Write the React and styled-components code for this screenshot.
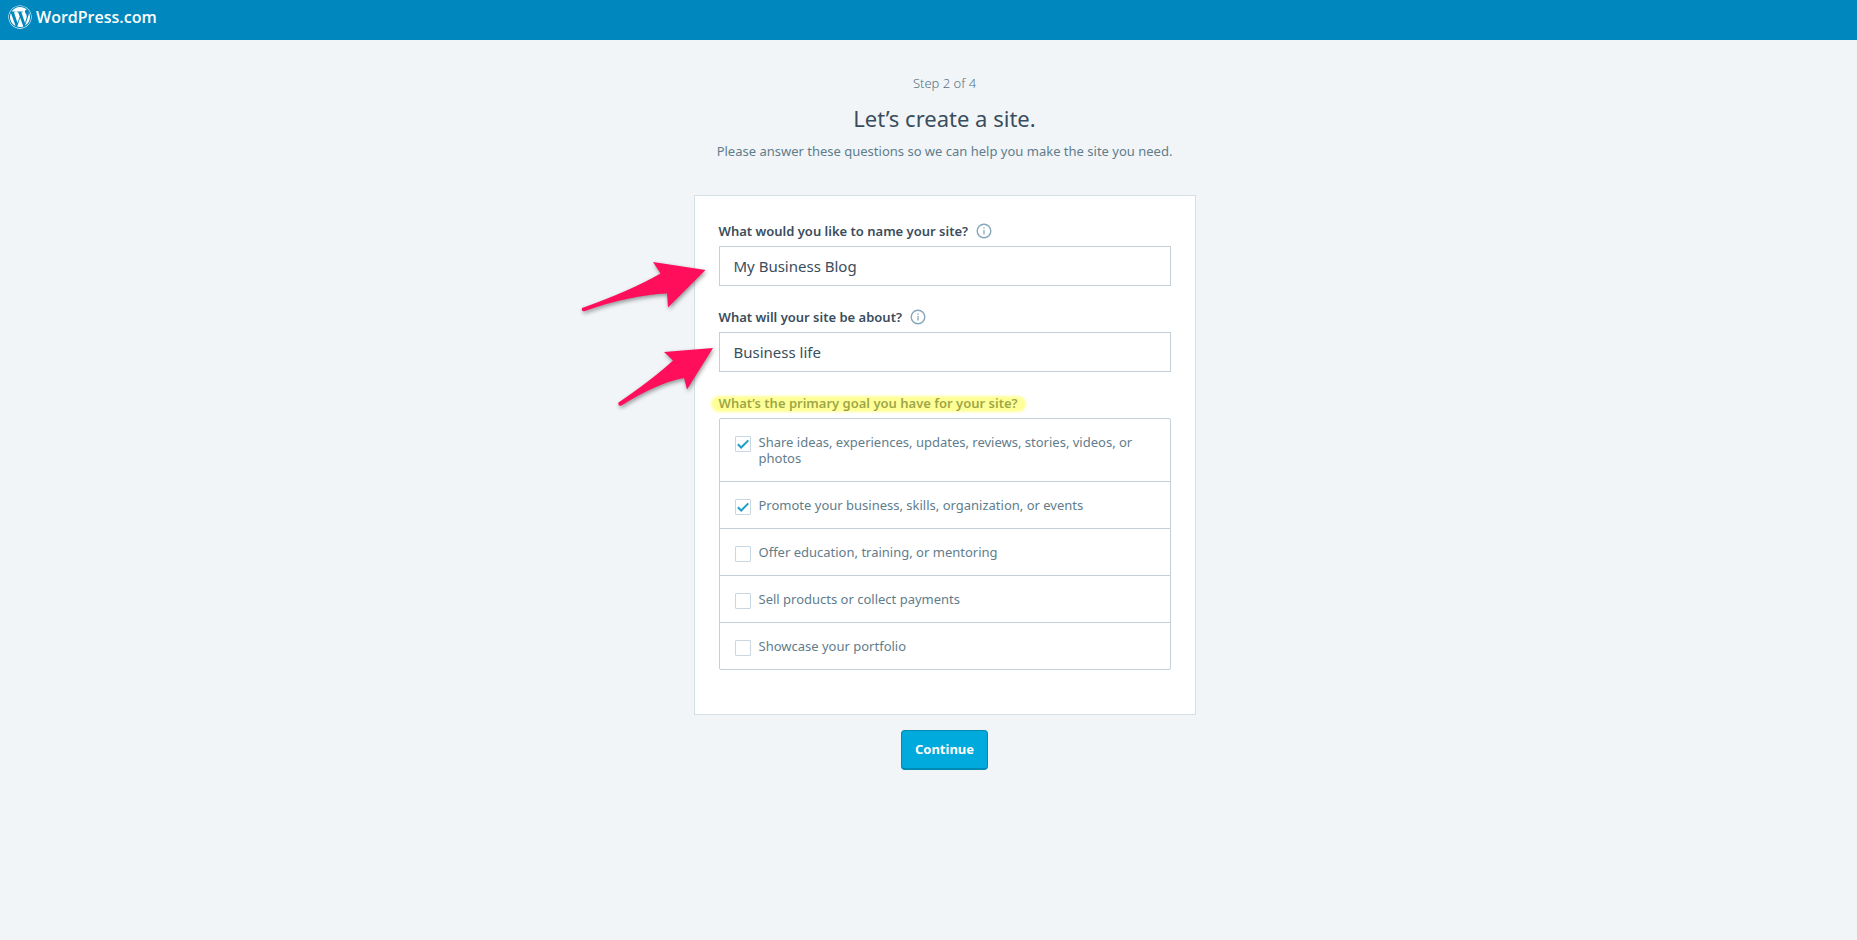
import { useState } from 'react';
import styled, { createGlobalStyle } from 'styled-components';
import { FaWordpress } from 'react-icons/fa';

const goals = [
  'Share ideas, experiences, updates, reviews, stories, videos, or photos',
  'Promote your business, skills, organization, or events',
  'Offer education, training, or mentoring',
  'Sell products or collect payments',
  'Showcase your portfolio',
];

function InfoIcon() {
  return (
    <svg width="16" height="16" viewBox="0 0 16 16" fill="none" aria-hidden="true">
      <circle cx="8" cy="8" r="6.8" stroke="#87a6bc" strokeWidth="1.4" />
      <path d="M8 7v4.5M8 4.4v1.3" stroke="#87a6bc" strokeWidth="1.3" />
    </svg>
  );
}

function TextField({ id, label, defaultValue, children }) {
  return (
    <Field>
      <LabelRow>
        <Label htmlFor={id}>{label}</Label>
        <InfoButton type="button" aria-label="More information">
          <InfoIcon />
        </InfoButton>
      </LabelRow>
      <TextInput id={id} type="text" defaultValue={defaultValue} />
      {children}
    </Field>
  );
}

function App() {
  const [checked, setChecked] = useState([0, 1]);

  const toggle = (index) => {
    setChecked((prev) =>
      prev.includes(index) ? prev.filter((i) => i !== index) : [...prev, index]
    );
  };

  return (
    <>
      <GlobalStyle />
      <Masthead>
        <Brand href="#">
          <FaWordpress size={24} />
          WordPress.com
        </Brand>
      </Masthead>
      <Main>
        <Step>Step 2 of 4</Step>
        <Title>Let’s create a site.</Title>
        <Subtitle>Please answer these questions so we can help you make the site you need.</Subtitle>
        <Form onSubmit={(e) => e.preventDefault()}>
          <Card>
            <TextField
              id="site-name"
              label="What would you like to name your site?"
              defaultValue="My Business Blog"
            >
              <FirstArrow viewBox="0 0 130 60" width="130" height="60" aria-hidden="true">
                <path d="M2 53 Q50 36 80.500 18.500 L73 7 L125.500 15 L88 52.500 L87 38.500 Q50 40 5 56 Q1 57 2 53 Z" />
              </FirstArrow>
            </TextField>
            <TextField
              id="site-topic"
              label="What will your site be about?"
              defaultValue="Business life"
            >
              <SecondArrow viewBox="0 0 102 70" width="102" height="70" aria-hidden="true">
                <path d="M3.500 62.500 Q38 39 58 20.500 L49 12 L98 8 L72 49.500 L69 38 Q42 43 6.500 65.500 Q2.500 66.500 3.500 62.500 Z" />
              </SecondArrow>
            </TextField>
            <Goals>
              <Legend>
                <Highlight>What’s the primary goal you have for your site?</Highlight>
              </Legend>
              <GoalList>
                {goals.map((goal, index) => (
                  <Goal key={goal}>
                    <Checkbox
                      type="checkbox"
                      checked={checked.includes(index)}
                      onChange={() => toggle(index)}
                    />
                    <span>{goal}</span>
                  </Goal>
                ))}
              </GoalList>
            </Goals>
          </Card>
          <Submit type="submit">Continue</Submit>
        </Form>
      </Main>
    </>
  );
}

export default App;

const GlobalStyle = createGlobalStyle`
  * {
    box-sizing: border-box;
  }

  body {
    margin: 0;
    background: #f1f5f8;
    color: #3a4d5c;
    font-family: 'Noto Sans', 'Open Sans', sans-serif;
    font-size: 13px;
  }

  button,
  input {
    font-family: inherit;
  }
`;

const Masthead = styled.header`
  height: 40px;
  padding: 5px 8px;
  background: #0087be;
`;

const Brand = styled.a`
  display: inline-flex;
  align-items: center;
  gap: 4px;
  color: #fff;
  font-family: 'Open Sans', sans-serif;
  font-size: 16px;
  font-weight: 600;
  line-height: 24px;
  text-decoration: none;
`;

const Main = styled.main`
  display: flex;
  flex-direction: column;
  align-items: center;
  padding: 32px 0 32px 32px;
`;

const Step = styled.p`
  margin: 0;
  color: #56717f;
  font-weight: 300;
  line-height: 22px;
`;

const Title = styled.h1`
  margin: 8px 0 7px;
  font-size: 22px;
  font-weight: 400;
  line-height: 32px;
`;

const Subtitle = styled.p`
  margin: 0 0 34px;
  color: #5f7d8c;
  line-height: 20px;
`;

const Form = styled.form`
  display: flex;
  flex-direction: column;
  align-items: center;
  gap: 15px;
  width: 100%;
  max-width: 502px;
`;

const Card = styled.div`
  width: 100%;
  padding: 24px;
  border: 1px solid #d5dfe6;
  background: #fff;
`;

const Field = styled.div`
  position: relative;
  margin-bottom: 20px;
`;

const LabelRow = styled.div`
  display: flex;
  align-items: center;
  gap: 8px;
  height: 22px;
  margin-bottom: 4px;
`;

const Label = styled.label`
  font-weight: 600;
  line-height: 22px;
`;

const InfoButton = styled.button`
  display: flex;
  padding: 0;
  border: 0;
  background: none;
  cursor: pointer;
`;

const TextInput = styled.input`
  display: block;
  width: 100%;
  height: 40px;
  padding: 7px 14px;
  border: 1px solid #c5d0d6;
  border-radius: 0;
  background: #fff;
  color: #3a4d5c;
  font-size: 15px;
  line-height: 24px;
`;

const Arrow = styled.svg`
  position: absolute;
  fill: #ff0f5b;
  filter: drop-shadow(1px 2px 2px rgba(0, 0, 0, 0.4));
  pointer-events: none;
`;

const FirstArrow = styled(Arrow)`
  top: 35px;
  right: 461px;
`;

const SecondArrow = styled(Arrow)`
  top: 34px;
  right: 454px;
`;

const Goals = styled.fieldset`
  min-width: 0;
  margin: 0 0 20px;
  padding: 0;
  border: 0;
`;

const Legend = styled.legend`
  padding: 0;
  margin-bottom: 4px;
  font-weight: 600;
  line-height: 22px;
`;

const Highlight = styled.span`
  position: relative;

  &::after {
    content: '';
    position: absolute;
    inset: 2px -8px 0;
    border-radius: 8px;
    background: rgba(255, 255, 50, 0.5);
    filter: blur(1px);
  }
`;

const GoalList = styled.div`
  border: 1px solid #c5d0d6;
  border-radius: 2px;
`;

const Goal = styled.label`
  display: flex;
  align-items: flex-start;
  gap: 8px;
  padding: 15px;
  color: #5f7d8c;
  line-height: 16px;
  cursor: pointer;

  & + & {
    border-top: 1px solid #c5d0d6;
  }
`;

const Checkbox = styled.input`
  appearance: none;
  flex: none;
  width: 16px;
  height: 16px;
  margin: 2px 0 -2px;
  border: 1px solid #c8d7e1;
  border-radius: 1px;
  background: #fff;

  &:checked {
    background: #fff
      url("data:image/svg+xml,%3Csvg xmlns='http://www.w3.org/2000/svg' viewBox='0 0 14 14'%3E%3Cpath d='M1.8 7.300l3.400 3.200L12.300 3.400' fill='none' stroke='%231e9fc8' stroke-width='2'/%3E%3C/svg%3E")
      center / 14px 14px no-repeat;
  }
`;

const Submit = styled.button`
  height: 40px;
  padding: 0 13px 2px;
  border: 1px solid #008ab3;
  border-bottom-width: 2px;
  border-radius: 4px;
  background: #00aadc;
  color: #fff;
  font-size: 13px;
  font-weight: 700;
  cursor: pointer;
`;
